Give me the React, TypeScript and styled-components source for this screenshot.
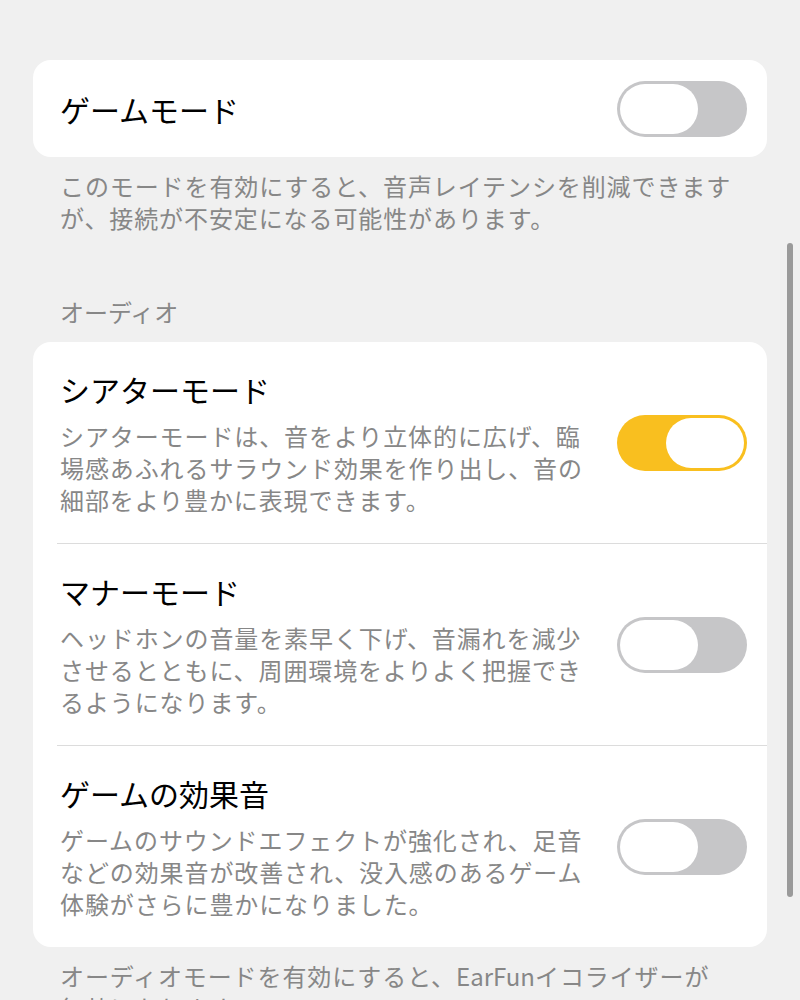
import React from 'react'
import styled, { createGlobalStyle } from 'styled-components'

const GlobalStyle = createGlobalStyle`
  html, body {
    margin: 0;
    padding: 0;
    background: #f0f0f0;
    font-family: "Noto Sans CJK JP", "Noto Sans", sans-serif;
    overflow: hidden;
  }
`

type Setting = {
  title: string
  desc: string
  on: boolean
}

const audioSettings: Setting[] = [
  {
    title: 'シアターモード',
    desc: 'シアターモードは、音をより立体的に広げ、臨場感あふれるサラウンド効果を作り出し、音の細部をより豊かに表現できます。',
    on: true,
  },
  {
    title: 'マナーモード',
    desc: 'ヘッドホンの音量を素早く下げ、音漏れを減少させるとともに、周囲環境をよりよく把握できるようになります。',
    on: false,
  },
  {
    title: 'ゲームの効果音',
    desc: 'ゲームのサウンドエフェクトが強化され、足音などの効果音が改善され、没入感のあるゲーム体験がさらに豊かになりました。',
    on: false,
  },
]

const Toggle: React.FC<{ on: boolean }> = ({ on }) => (
  <Track $on={on}>
    <Knob />
  </Track>
)

const App: React.FC = () => {
  return (
    <>
      <GlobalStyle />
      <Page>
        <Card>
          <SimpleRow>
            <RowTitle>ゲームモード</RowTitle>
            <Toggle on={false} />
          </SimpleRow>
        </Card>
        <Caption>
          このモードを有効にすると、音声レイテンシを削減できますが、接続が不安定になる可能性があります。
        </Caption>

        <SectionHeader>オーディオ</SectionHeader>
        <Card>
          {audioSettings.map(s => (
            <Row key={s.title}>
              <RowText>
                <RowTitle>{s.title}</RowTitle>
                <Desc>{s.desc}</Desc>
              </RowText>
              <Toggle on={s.on} />
            </Row>
          ))}
        </Card>
        <Caption>
          オーディオモードを有効にすると、<Latin>EarFun</Latin>イコライザーが
          <br />
          無効になります。
        </Caption>
      </Page>
      <Scrollbar />
    </>
  )
}

const Page = styled.div`
  display: flex;
  flex-direction: column;
  padding: 60px 33px 0;
  height: 1000px;
  box-sizing: border-box;
  overflow: hidden;
  & > * {
    flex-shrink: 0;
  }
`

const Card = styled.div`
  background: #ffffff;
  border-radius: 18px;
  overflow: hidden;
`

const SimpleRow = styled.div`
  display: flex;
  align-items: center;
  justify-content: space-between;
  height: 97px;
  padding: 0 20px 0 27px;
`

const Row = styled.div`
  display: flex;
  align-items: center;
  justify-content: space-between;
  margin-left: 24px;
  padding: 27px 20px 27px 3px;
  & + & {
    border-top: 1px solid #dcdcdc;
  }
`

const RowText = styled.div`
  display: flex;
  flex-direction: column;
  gap: 11px;
  width: 530px;
`

const RowTitle = styled.div`
  font-size: 30px;
  line-height: 40px;
  color: #000000;
`

const Desc = styled.div`
  font-size: 24px;
  line-height: 32px;
  letter-spacing: 0.9px;
  color: #878787;
`

const Caption = styled.div`
  margin-top: 13px;
  padding: 0 27px;
  font-size: 24px;
  line-height: 32px;
  letter-spacing: 0.9px;
  color: #878787;
`

const Latin = styled.span`
  letter-spacing: 0;
`

const SectionHeader = styled.div`
  margin-top: 62px;
  margin-bottom: 14px;
  padding: 0 27px;
  font-size: 24px;
  line-height: 32px;
  color: #878787;
`

const Track = styled.div<{ $on: boolean }>`
  flex-shrink: 0;
  display: flex;
  justify-content: ${p => (p.$on ? 'flex-end' : 'flex-start')};
  width: 130px;
  height: 56px;
  padding: 3px;
  box-sizing: border-box;
  border-radius: 28px;
  background: ${p => (p.$on ? '#f9bf1f' : '#c6c6c8')};
`

const Knob = styled.div`
  width: 78px;
  height: 50px;
  border-radius: 25px;
  background: #ffffff;
`

const Scrollbar = styled.div`
  position: fixed;
  top: 243px;
  left: 787px;
  width: 6px;
  height: 654px;
  border-radius: 3px;
  background: #9a9a9a;
`

export default App
